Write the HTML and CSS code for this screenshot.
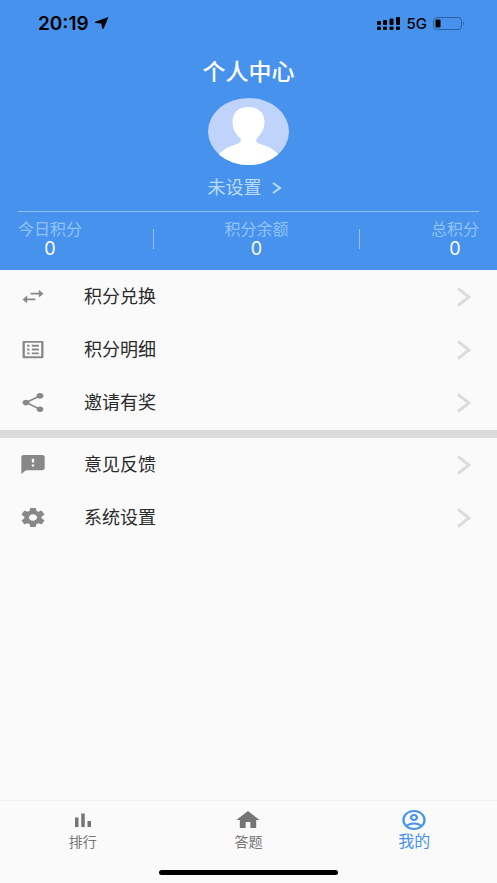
FILE: index.html
```html
<!DOCTYPE html>
<html lang="zh-CN">
<head>
<meta charset="utf-8">
<meta name="viewport" content="width=device-width, initial-scale=1">
<title>个人中心</title>
<link rel="stylesheet" href="styles.css">
</head>
<body>
<div class="app">
  <header class="hero">
    <div class="status">
      <div class="status-side">
        <span class="clock">20:19</span>
        <svg class="locate" viewBox="0 0 14 12" aria-hidden="true"><path d="M13.500 0 .4 4.700Q-.4 5.500.6 6L6.300 6.500 7.200 11.300Q7.900 12.300 8.800 11.300Z"/></svg>
      </div>
      <div class="status-side">
        <svg class="signal" viewBox="0 0 24 13" aria-hidden="true">
          <g><rect x="0" y="4" width="4" height="4" rx="1"/><rect x="6" y="3" width="4" height="5" rx="1"/><rect x="12.500" y="1.500" width="4" height="6.500" rx="1"/><rect x="19" y="0" width="4" height="8" rx="1"/>
          <rect x="0" y="9.500" width="4" height="3.500" rx="1"/><rect x="6" y="9.500" width="4" height="3.500" rx="1"/><rect x="12.500" y="9.500" width="4" height="3.500" rx="1"/><rect x="19" y="9.500" width="4" height="3.500" rx="1"/></g>
        </svg>
        <span class="network">5G</span>
        <svg class="battery" viewBox="0 0 32 13" aria-hidden="true"><rect class="shell" x=".5" y=".5" width="28" height="12" rx="3.500"/><rect x="2.500" y="2.500" width="5" height="8" rx="1"/><path class="tip" d="M30 4.500q2 2 0 4z"/></svg>
      </div>
    </div>
    <h1 class="title">个人中心</h1>
    <svg class="avatar" viewBox="0 0 81 67" role="img" aria-label="头像">
      <defs><clipPath id="face"><ellipse cx="40.500" cy="33.500" rx="40.500" ry="33.500"/></clipPath></defs>
      <g clip-path="url(#face)"><rect class="avatar-bg" width="81" height="67"/><path class="avatar-fg" d="M40.500 9C51 9 57 15.500 56.500 25 56 33 52.500 36 49 40.500 47 43.500 48.500 44.500 52 46 62 49 66 51.500 71 57V67H10V57C15 51.500 20 49 29 46 33 44.500 34 43 32 40 28 36 25 33 24.500 25 24 15.500 30 9 40.500 9Z"/></g>
    </svg>
    <button class="name" type="button">未设置<svg class="name-arrow" viewBox="0 0 10 12" aria-hidden="true"><path d="M1 1 8 6 1 11"/></svg></button>
    <div class="stats">
      <div class="stat"><span class="stat-label">今日积分</span><span class="stat-value">0</span></div>
      <span class="rule"></span>
      <div class="stat"><span class="stat-label">积分余额</span><span class="stat-value">0</span></div>
      <span class="rule"></span>
      <div class="stat"><span class="stat-label">总积分</span><span class="stat-value">0</span></div>
    </div>
  </header>

  <main class="menu">
    <div class="group">
      <a class="row" href="#exchange">
        <svg class="icon" viewBox="0 0 24 24" preserveAspectRatio="none" aria-hidden="true"><path d="M6.990 11 3 15l3.990 4v-3H14v-2H6.990zM21 9l-3.990-4v3H10v2h7.010v3z"/></svg>
        <span class="row-label">积分兑换</span>
        <svg class="arrow" viewBox="0 0 14 20" aria-hidden="true"><path d="M1 1.500 12 10 1 18.500"/></svg>
      </a>
      <a class="row" href="#details">
        <svg class="icon" viewBox="0 0 24 24" preserveAspectRatio="none" aria-hidden="true"><path d="M19 5v14H5V5h14m1.100-2H3.900c-.5 0-.9.4-.9.9v16.200c0 .4.4.9.9.9h16.200c.4 0 .9-.5.9-.9V3.900c0-.5-.5-.9-.9-.9zM11 7h6v2h-6zm0 4h6v2h-6zm0 4h6v2h-6zM7 7h2v2H7zm0 4h2v2H7zm0 4h2v2H7z"/></svg>
        <span class="row-label">积分明细</span>
        <svg class="arrow" viewBox="0 0 14 20" aria-hidden="true"><path d="M1 1.500 12 10 1 18.500"/></svg>
      </a>
      <a class="row" href="#invite">
        <svg class="icon" viewBox="0 0 24 24" preserveAspectRatio="none" aria-hidden="true"><path d="M18 16.080c-.76 0-1.440.3-1.960.77L8.910 12.700c.05-.23.09-.46.09-.7s-.04-.47-.09-.7l7.050-4.110c.54.5 1.250.81 2.040.81 1.660 0 3-1.340 3-3s-1.340-3-3-3-3 1.340-3 3c0 .24.04.47.09.7L8.040 9.810C7.500 9.310 6.790 9 6 9c-1.660 0-3 1.340-3 3s1.340 3 3 3c.79 0 1.500-.31 2.040-.81l7.120 4.160c-.05.21-.08.43-.08.65 0 1.610 1.310 2.920 2.920 2.920s2.920-1.310 2.920-2.920-1.310-2.920-2.920-2.920z"/></svg>
        <span class="row-label">邀请有奖</span>
        <svg class="arrow" viewBox="0 0 14 20" aria-hidden="true"><path d="M1 1.500 12 10 1 18.500"/></svg>
      </a>
    </div>
    <div class="group">
      <a class="row" href="#feedback">
        <svg class="icon" viewBox="0 0 24 24" preserveAspectRatio="none" aria-hidden="true"><path d="M20 2H4c-1.100 0-1.990.9-1.990 2L2 22l4-4h14c1.100 0 2-.9 2-2V4c0-1.100-.9-2-2-2zm-7 12h-2v-2h2v2zm0-4h-2V6h2v4z"/></svg>
        <span class="row-label">意见反馈</span>
        <svg class="arrow" viewBox="0 0 14 20" aria-hidden="true"><path d="M1 1.500 12 10 1 18.500"/></svg>
      </a>
      <a class="row" href="#settings">
        <svg class="icon" viewBox="0 0 24 24" preserveAspectRatio="none" aria-hidden="true"><path d="M19.430 12.980c.04-.32.07-.64.07-.98s-.03-.66-.07-.98l2.110-1.650c.19-.15.24-.42.12-.64l-2-3.460c-.12-.22-.39-.3-.61-.22l-2.490 1c-.52-.4-1.080-.73-1.690-.98l-.38-2.650C14.460 2.180 14.250 2 14 2h-4c-.25 0-.46.18-.49.42l-.38 2.650c-.61.25-1.170.59-1.690.98l-2.490-1c-.23-.09-.49 0-.61.22l-2 3.460c-.13.22-.07.49.12.64l2.110 1.650c-.04.32-.07.65-.07.98s.03.66.07.98l-2.110 1.650c-.19.15-.24.42-.12.64l2 3.460c.12.22.39.3.61.22l2.490-1c.52.4 1.080.73 1.690.98l.38 2.650c.03.24.24.42.49.42h4c.25 0 .46-.18.49-.42l.38-2.650c.61-.25 1.170-.59 1.690-.98l2.490 1c.23.09.49 0 .61-.22l2-3.460c.12-.22.07-.49-.12-.64zM12 15.500c-1.930 0-3.500-1.570-3.500-3.500s1.570-3.500 3.500-3.500 3.500 1.570 3.500 3.500-1.570 3.500-3.500 3.500z"/></svg>
        <span class="row-label">系统设置</span>
        <svg class="arrow" viewBox="0 0 14 20" aria-hidden="true"><path d="M1 1.500 12 10 1 18.500"/></svg>
      </a>
    </div>
  </main>

  <footer class="bottom">
    <nav class="tabs">
      <a class="tab" href="#rank">
        <svg class="tab-icon" viewBox="0 0 28 24" aria-hidden="true"><path d="M6 9.500h3.500V19H6zM12.250 5.500h3.500V19h-3.500zM18.500 13H22v6h-3.500z"/></svg>
        <span>排行</span>
      </a>
      <a class="tab" href="#quiz">
        <svg class="tab-icon" viewBox="0 0 24 24" preserveAspectRatio="none" aria-hidden="true"><path d="M10 20v-6h4v6h5v-8h3L12 3 2 12h3v8z"/></svg>
        <span>答题</span>
      </a>
      <a class="tab active" href="#me" aria-current="page">
        <svg class="tab-icon" viewBox="0 0 24 24" preserveAspectRatio="none" aria-hidden="true"><path d="M12 2C6.480 2 2 6.480 2 12s4.480 10 10 10 10-4.480 10-10S17.520 2 12 2zM7.070 18.280c.43-.9 3.050-1.780 4.930-1.780s4.510.88 4.930 1.780C15.570 19.360 13.860 20 12 20s-3.570-.64-4.930-1.720zm11.290-1.450c-1.430-1.740-4.900-2.330-6.360-2.330s-4.930.59-6.360 2.330C4.620 15.490 4 13.820 4 12c0-4.410 3.590-8 8-8s8 3.590 8 8c0 1.820-.62 3.490-1.640 4.830zM12 6c-1.940 0-3.500 1.560-3.500 3.500S10.060 13 12 13s3.500-1.560 3.500-3.500S13.940 6 12 6zm0 5c-.83 0-1.500-.67-1.500-1.500S11.170 8 12 8s1.500.67 1.500 1.500S12.830 11 12 11z"/></svg>
        <span>我的</span>
      </a>
    </nav>
    <div class="home-bar"></div>
  </footer>
</div>
</body>
</html>
```

FILE: styles.css
```css
* {
  box-sizing: border-box;
}

body {
  margin: 0;
  background: #fafafa;
  color: #2a2a2a;
  font-family: Inter, "Noto Sans CJK SC", sans-serif;
}

svg {
  display: block;
  flex: none;
}

a {
  color: inherit;
  text-decoration: none;
}

.app {
  display: flex;
  flex-direction: column;
  min-height: 100vh;
}

.hero {
  display: flex;
  flex-direction: column;
  align-items: center;
  padding: 0 18px 11px;
  background: #4792ec;
  color: #fff;
}

.status {
  display: flex;
  justify-content: space-between;
  align-self: stretch;
  padding: 11px 14px 0 20px;
  color: #000;
}

.status-side {
  display: flex;
  align-items: center;
  gap: 6px;
  height: 24px;
}

.clock {
  font-size: 19px;
  font-weight: 600;
}

.locate {
  width: 14px;
  height: 12px;
}

.signal {
  width: 24px;
  height: 13px;
}

.network {
  font-size: 15px;
  font-weight: 500;
}

.battery {
  width: 32px;
  height: 13px;
}

.battery .shell {
  fill: none;
  stroke: #2c5f9b;
}

.battery .tip {
  fill: #2c5f9b;
}

.title {
  margin: 21px 0 10px;
  font-size: 23px;
  font-weight: 500;
  line-height: 32px;
}

.avatar {
  width: 81px;
  height: 67px;
}

.avatar-bg {
  fill: #bfd3fb;
}

.avatar-fg {
  fill: #fff;
}

.name {
  display: flex;
  align-items: center;
  gap: 10px;
  margin: 10px 0;
  padding: 0 8px 0 0;
  border: 0;
  background: none;
  color: #b9dcfa;
  font: inherit;
  font-size: 18px;
  line-height: 26px;
}

.name-arrow {
  width: 10px;
  height: 12px;
  fill: none;
  stroke: currentColor;
  stroke-width: 2;
}

.stats {
  display: flex;
  justify-content: space-between;
  align-items: center;
  align-self: stretch;
  padding-top: 7px;
  border-top: 1px solid #90c3f7;
}

.stat {
  display: flex;
  flex-direction: column;
  align-items: center;
}

.stat-label {
  color: #90c3f7;
  font-size: 16px;
  line-height: 20px;
}

.stat-value {
  font-size: 18px;
  line-height: 20px;
}

.rule {
  width: 1px;
  height: 20px;
  background: #90c3f7;
}

.menu {
  flex: 1;
}

.group {
  padding-bottom: 1px;
}

.group + .group {
  border-top: 8px solid #dcdcdc;
}

.row {
  display: flex;
  align-items: center;
  height: 53px;
  padding: 0 26px 0 19px;
}

.icon {
  width: 28px;
  height: 23px;
  fill: #888;
}

.row-label {
  flex: 1;
  padding-left: 37px;
  font-size: 18px;
  line-height: 26px;
}

.arrow {
  width: 14px;
  height: 20px;
  fill: none;
  stroke: #dcdcdc;
  stroke-width: 3;
}

.bottom {
  border-top: 1px solid #f0f0f0;
}

.tabs {
  display: grid;
  grid-template-columns: repeat(3, 1fr);
  padding-top: 7px;
}

.tab {
  display: flex;
  flex-direction: column;
  align-items: center;
  color: #757575;
  font-size: 14px;
  line-height: 20px;
}

.tab.active {
  color: #4792ec;
  font-size: 16px;
  line-height: 18px;
}

.tab-icon {
  width: 28px;
  height: 24px;
  fill: currentColor;
}

.home-bar {
  width: 36%;
  height: 5px;
  margin: 18px auto 8px;
  border-radius: 3px;
  background: #000;
}
```
